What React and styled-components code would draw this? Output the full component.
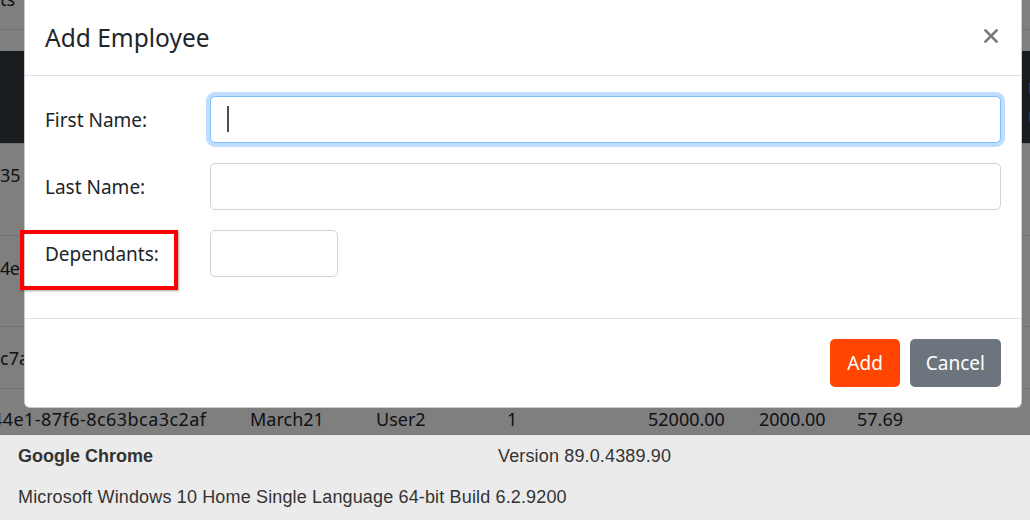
import React from 'react';
import styled, { createGlobalStyle } from 'styled-components';

const GlobalStyle = createGlobalStyle`
  html, body {
    margin: 0;
    padding: 0;
    background: #ebebeb;
  }
  * {
    box-sizing: border-box;
  }
`;

const Page = styled.div`
  width: 1030px;
  height: 520px;
  overflow: hidden;
  font-family: "Noto Sans", "Open Sans", sans-serif;
`;

const Screen = styled.div`
  position: relative;
  height: 435px;
  overflow: hidden;
  background: #fff;
  color: #212529;
`;

const TopRow = styled.div`
  height: 30px;
  border-bottom: 1px solid #dee2e6;
  font-size: 18px;
  line-height: 18px;
  overflow: hidden;
  span {
    display: block;
    margin-top: -10px;
  }
`;

const GapRow = styled.div`
  height: 21px;
`;

const HeadRow = styled.div`
  height: 92px;
  background: #343a40;
  display: flex;
  justify-content: flex-end;
  padding-top: 24px;
  font-size: 18px;
  line-height: 29px;
  color: #b8ccff;
  span {
    width: 2px;
    overflow: hidden;
  }
`;

const Row = styled.div`
  height: ${(p) => p.$h}px;
  border-top: 1px solid #dee2e6;
  padding-top: ${(p) => p.$pad}px;
  font-size: 18px;
  line-height: 27px;
  display: grid;
  grid-template-columns: 250px 126px 131px 141px 111px 98px 1fr;
  white-space: nowrap;
`;

const Cell = styled.div`
  text-indent: ${(p) => p.$indent || 0}px;
  letter-spacing: ${(p) => p.$spacing || 0}px;
`;

const Backdrop = styled.div`
  position: absolute;
  inset: 0;
  background: rgba(0, 0, 0, 0.5);
  display: flex;
  align-items: flex-start;
  padding-left: 24px;
`;

const Dialog = styled.div`
  width: 998px;
  background: #fff;
  border: 1px solid rgba(0, 0, 0, 0.2);
  border-top: none;
  border-radius: 0 0 6px 6px;
`;

const Header = styled.div`
  height: 76px;
  border-bottom: 1px solid #dee2e6;
  display: flex;
  align-items: center;
  justify-content: space-between;
  padding: 0 23px 0 20px;
`;

const Title = styled.h5`
  margin: 0;
  font-size: 24.5px;
  font-weight: 400;
  color: #212529;
`;

const Close = styled.button`
  border: none;
  background: none;
  padding: 0;
  margin-top: -4px;
  width: 14px;
  height: 14px;
  display: flex;
  cursor: pointer;
`;

const Body = styled.div`
  padding: 20px 20px 41px;
  display: grid;
  grid-template-columns: 165px 1fr;
  row-gap: 20px;
  align-items: center;
`;

const Label = styled.label`
  font-size: 19px;
  color: #212529;
`;

const Field = styled.div`
  position: relative;
  width: ${(p) => p.$w || '100%'};
`;

const Input = styled.input`
  display: block;
  width: 100%;
  height: 47px;
  border: 1px solid ${(p) => (p.$focus ? '#80bdff' : '#ced4da')};
  border-radius: 5px;
  box-shadow: ${(p) => (p.$focus ? '0 0 0 4px rgba(0, 123, 255, 0.25)' : 'none')};
  font-family: inherit;
  font-size: 19px;
  padding: 0 16px;
  outline: none;
  background: #fff;
`;

const Caret = styled.span`
  position: absolute;
  left: 17px;
  top: 10px;
  width: 2px;
  height: 26px;
  background: #495057;
`;

const Footer = styled.div`
  border-top: 1px solid #dee2e6;
  padding: 20px;
  display: flex;
  justify-content: flex-end;
  gap: 10px;
`;

const Button = styled.button`
  height: 48px;
  padding: 0 ${(p) => p.$px}px;
  border: none;
  border-radius: 5px;
  background: ${(p) => p.$bg};
  color: #fff;
  font-family: inherit;
  font-size: 19px;
  cursor: pointer;
`;

const Callout = styled.div`
  position: absolute;
  left: 20px;
  top: 230px;
  width: 158px;
  height: 60px;
  border: 4px solid #ff0000;
  box-shadow: 1px 1px 2px rgba(0, 0, 0, 0.35);
`;

const Info = styled.div`
  height: 85px;
  background: #ebebeb;
  padding: 1px 0 0 18px;
  font-family: "Liberation Sans", Arial, sans-serif;
  font-size: 18px;
  letter-spacing: 0.15px;
  color: #333;
`;

const InfoRow = styled.div`
  display: grid;
  grid-template-columns: 480px 1fr;
  line-height: 41px;
  white-space: nowrap;
`;

const Browser = styled.div`
  font-weight: 700;
  letter-spacing: 0;
`;

const rows = [
  { h: 92, pad: 18, cells: ['35 d1-4b9e-91aa-22f0c1a7e0d4'] },
  { h: 91, pad: 19, spacing: -0.6, cells: ['4eb2-40c3-9d12-7ab3fe011c90'] },
  { h: 62, pad: 18, cells: ['c7a0-4f55-8e21-10cd3b7f9a16'] },
  {
    h: 60,
    pad: 17,
    indent: -8,
    spacing: 0.45,
    cells: ['44e1-87f6-8c63bca3c2af', 'March21', 'User2', '1', '52000.00', '2000.00', '57.69'],
  },
];

function CloseIcon() {
  return (
    <svg width="14" height="14" viewBox="0 0 14 14">
      <path d="M1.5 1.5L12.5 12.5M12.5 1.5L1.5 12.5" stroke="#7a7a7a" strokeWidth="2.6" strokeLinecap="square" />
    </svg>
  );
}

export default function App() {
  return (
    <Page>
      <GlobalStyle />
      <Screen>
        <TopRow>
          <span>ts</span>
        </TopRow>
        <GapRow />
        <HeadRow>
          <span>
            U<br />U
          </span>
        </HeadRow>
        {rows.map((r, i) => (
          <Row key={i} $h={r.h} $pad={r.pad}>
            {r.cells.map((c, j) => (
              <Cell key={j} $indent={j === 0 ? r.indent : 0} $spacing={j === 0 ? r.spacing : 0}>
                {c}
              </Cell>
            ))}
          </Row>
        ))}

        <Backdrop>
          <Dialog>
            <Header>
              <Title>Add Employee</Title>
              <Close aria-label="Close">
                <CloseIcon />
              </Close>
            </Header>
            <Body>
              <Label>First Name:</Label>
              <Field>
                <Input $focus />
                <Caret />
              </Field>
              <Label>Last Name:</Label>
              <Field>
                <Input />
              </Field>
              <Label>Dependants:</Label>
              <Field $w="128px">
                <Input />
              </Field>
            </Body>
            <Footer>
              <Button $bg="#ff4500" $px={17}>Add</Button>
              <Button $bg="#6c757d" $px={16}>Cancel</Button>
            </Footer>
          </Dialog>
        </Backdrop>
        <Callout />
      </Screen>
      <Info>
        <InfoRow>
          <Browser>Google Chrome</Browser>
          <div>Version 89.0.4389.90</div>
        </InfoRow>
        <InfoRow>
          <div>Microsoft Windows 10 Home Single Language 64-bit Build 6.2.9200</div>
        </InfoRow>
      </Info>
    </Page>
  );
}
